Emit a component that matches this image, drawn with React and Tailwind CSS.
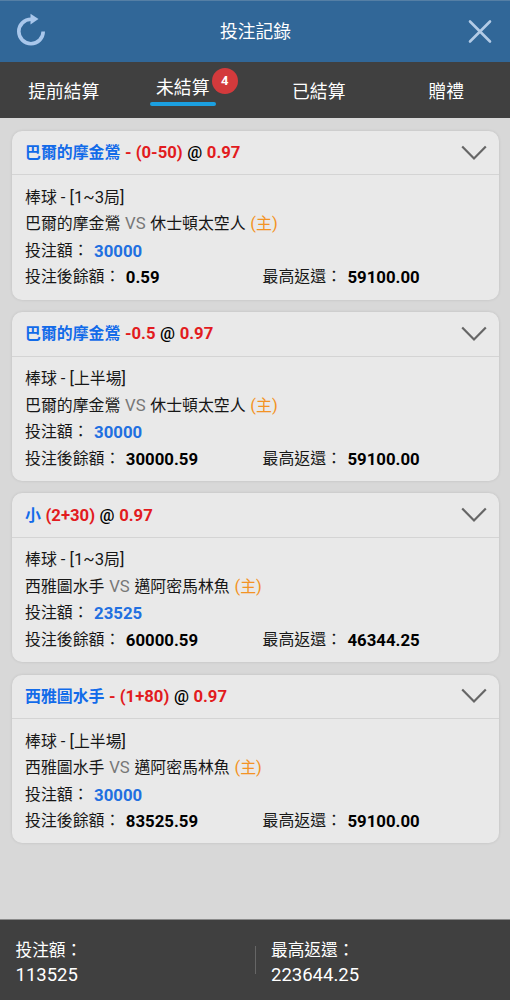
const TABS = [
  { label: '提前結算' },
  { label: '未結算', count: 4 },
  { label: '已結算' },
  { label: '贈禮' },
]

const BETS = [
  { pick: '巴爾的摩金鶯', line: '- (0-50)', odds: '0.97', range: '1~3', unit: '局', away: '巴爾的摩金鶯', home: '休士頓太空人', stake: '30000', balance: '0.59', payout: '59100.00' },
  { pick: '巴爾的摩金鶯', line: '-0.5', odds: '0.97', range: '', unit: '上半場', away: '巴爾的摩金鶯', home: '休士頓太空人', stake: '30000', balance: '30000.59', payout: '59100.00' },
  { pick: '小', line: '(2+30)', odds: '0.97', range: '1~3', unit: '局', away: '西雅圖水手', home: '邁阿密馬林魚', stake: '23525', balance: '60000.59', payout: '46344.25' },
  { pick: '西雅圖水手', line: '- (1+80)', odds: '0.97', range: '', unit: '上半場', away: '西雅圖水手', home: '邁阿密馬林魚', stake: '30000', balance: '83525.59', payout: '59100.00' },
]

function Header() {
  return (
    <header className="flex h-[62px] shrink-0 items-center justify-between border-t border-[#557fa5] bg-[#316798] px-4 text-[#a9c7eb]">
      <svg className="mb-1" width="30" height="34" viewBox="0 0 30 34" fill="none">
        <path d="M27.2 18.5A12.2 12.2 0 1 1 15 6.3" stroke="currentColor" strokeWidth="3.6" />
        <path d="M14.5 0.8L22.5 6L14.5 11.5Z" fill="currentColor" />
      </svg>
      <h1 className="pt-0.5 pr-px text-[17.8px] text-white">投注記錄</h1>
      <svg width="28" height="28" viewBox="0 0 28 28" fill="none" stroke="#b3cbe6" strokeWidth="2.6" strokeLinecap="round">
        <path d="M4 3.5L24 23.5M24 3.5L4 23.5" />
      </svg>
    </header>
  )
}

function Tab({ label, count }) {
  if (!count) {
    return <button className="flex w-1/4 items-center justify-center pt-[5px]">{label}</button>
  }
  return (
    <button className="flex w-1/4 items-start justify-center pt-[11px] pr-[17px]">
      <span className="relative flex w-[66px] flex-col items-center">
        <span className="h-[29px] leading-[30px]">{label}</span>
        <span className="h-1 w-full rounded-full bg-[#1ba0e1]" />
        <span className="absolute -top-[5px] left-[62px] flex size-[26px] items-center justify-center rounded-full bg-[#d33a3c] text-[13px] font-bold">{count}</span>
      </span>
    </button>
  )
}

function BetCard({ bet }) {
  return (
    <article className="h-[168.7px] rounded-[10px] bg-[#e9e9e9] shadow-[0_0_3px_rgba(0,0,0,0.12)]">
      {/* Selection and odds */}
      <div className="flex h-[44.4px] items-center justify-between border-b border-[#d4d4d4] pr-3 pl-[13px]">
        <h2 className="flex items-baseline gap-[4.6px] text-[16.7px] font-bold text-[#e21b20]">
          <span className="text-[15.9px] text-[#126be9]">{bet.pick}</span>
          <span>{bet.line}</span>
          <span className="font-medium text-black">@</span>
          <span>{bet.odds}</span>
        </h2>
        <svg width="26" height="16" viewBox="0 0 26 16" fill="none" stroke="#666" strokeWidth="2.2">
          <path d="M1.2 1.5L13 13.5L24.8 1.5" />
        </svg>
      </div>
      {/* Match details */}
      <div className="px-[13px] pt-[9.6px] text-[15.9px] leading-[26.5px] text-[#171717]">
        <p>棒球 <span className="text-[16.7px]">- [{bet.range}</span>{bet.unit}<span className="text-[16.7px]">]</span></p>
        <p className="flex gap-[4.7px]">
          <span>{bet.away}</span>
          <span className="text-[16.7px] text-[#777]">VS</span>
          <span>{bet.home}</span>
          <span className="text-[#f39324]"><span className="text-[16.7px]">(</span>主<span className="text-[16.7px]">)</span></span>
        </p>
        <p className="flex gap-[5.5px]">投注額：<b className="text-[16.8px] text-[#216fe0]">{bet.stake}</b></p>
        <div className="flex">
          <p className="flex w-[237.5px] gap-[5.5px]">投注後餘額：<b className="text-[16.8px] text-black">{bet.balance}</b></p>
          <p className="flex gap-[5.5px]">最高返還：<b className="text-[16.8px] text-black">{bet.payout}</b></p>
        </div>
      </div>
    </article>
  )
}

function Total({ label, value }) {
  return (
    <div className="flex-1 pt-[18px] pl-[15.5px]">
      <p className="text-[16.7px] leading-[25px]">{label}</p>
      <p className="text-[18.5px] leading-[25px]">{value}</p>
    </div>
  )
}

export default function App() {
  return (
    <div lang="zh-Hant" className="flex h-screen w-full flex-col overflow-hidden bg-[#d8d8d8] font-[Roboto,'Noto_Sans_CJK_TC',sans-serif]">
      <Header />
      <nav className="flex h-14 shrink-0 bg-[#404040] text-[17.8px] text-white">
        {TABS.map(tab => <Tab key={tab.label} {...tab} />)}
      </nav>
      <main className="flex flex-1 flex-col gap-[12.5px] pt-[13px] pr-[11.5px] pl-3">
        {BETS.map((bet, i) => <BetCard key={i} bet={bet} />)}
      </main>
      <footer className="flex h-[81px] shrink-0 border-t border-[#8a8a8a] bg-[#404040] text-white">
        <Total label="投注額：" value="113525" />
        <div className="mt-[26px] h-7 w-px bg-[#666]" />
        <Total label="最高返還：" value="223644.25" />
      </footer>
    </div>
  )
}
